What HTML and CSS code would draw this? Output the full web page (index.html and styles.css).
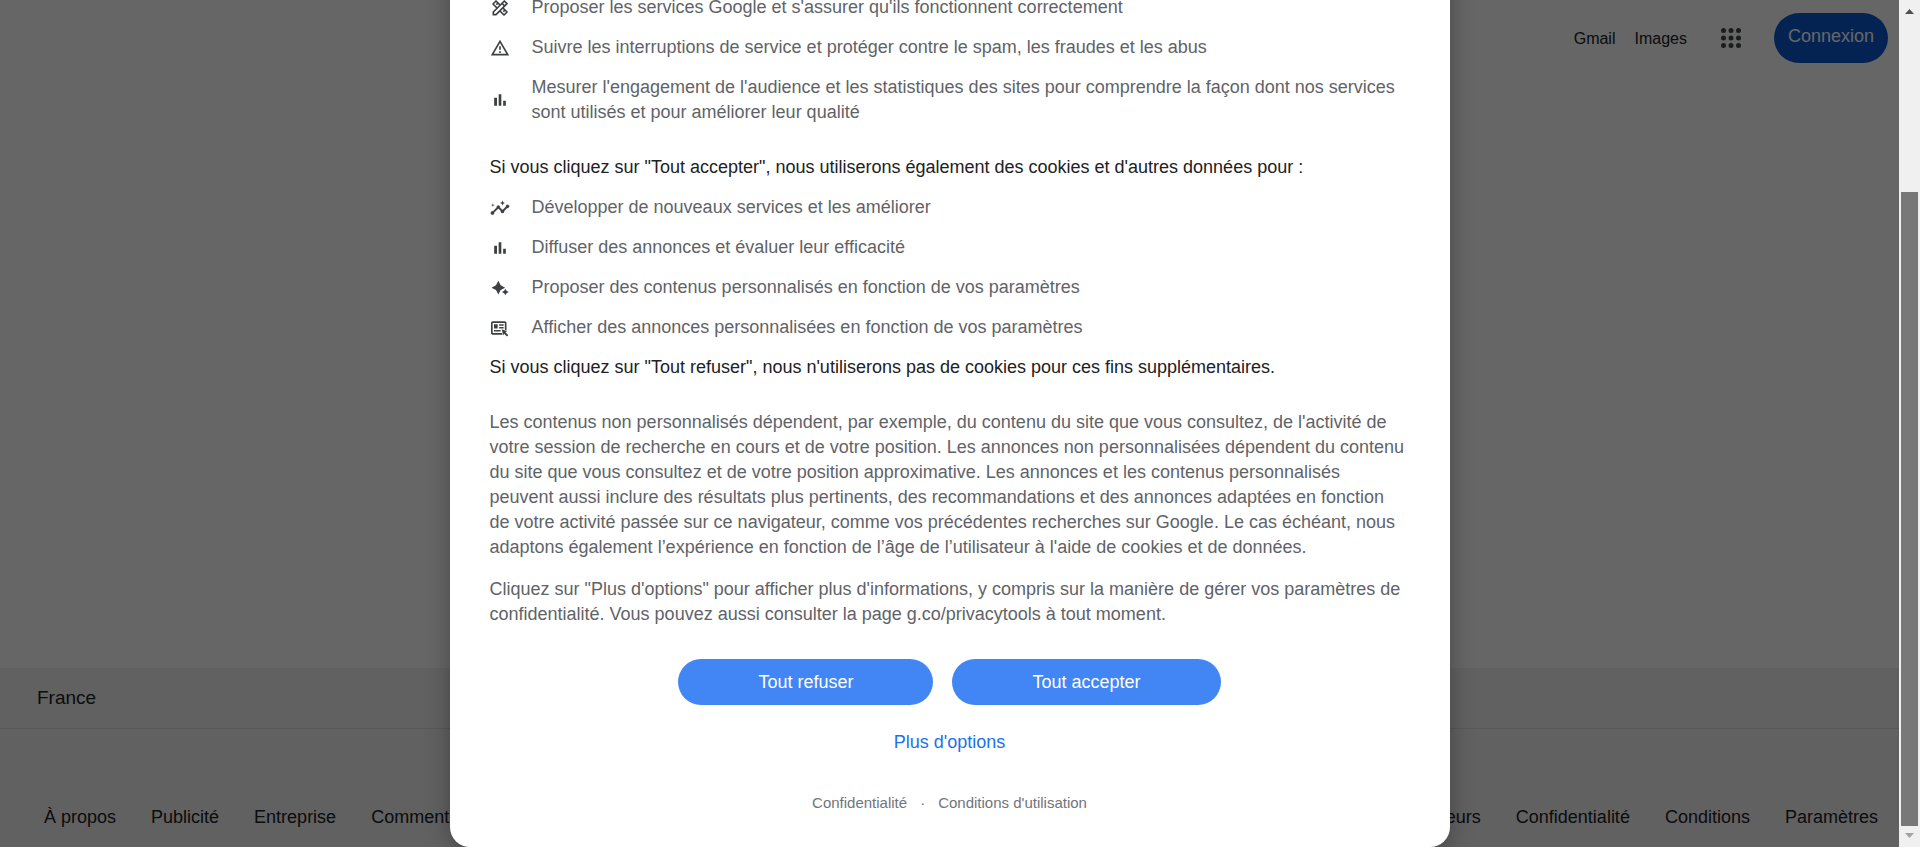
FILE: index.html
```html
<!DOCTYPE html>
<html lang="fr">
<head>
<meta charset="utf-8">
<title>Google</title>
<link rel="stylesheet" href="styles.css">
</head>
<body>
<svg class="symbols" aria-hidden="true">
  <symbol id="tools" viewBox="0 0 24 24"><g fill="#fff" stroke="#3c4043" stroke-width="2" stroke-linejoin="round"><path d="M3.600 7.200l3.600-3.600 13.200 13.200-3.600 3.600z"/><path d="M9.600 6l-2 2M18 14.400l-2 2"/><path d="M4 20v-3.200L17.200 3.600l3.200 3.200L7.200 20z"/><path d="M14.400 6.400l3.200 3.200"/></g></symbol>
  <symbol id="warning" viewBox="0 0 24 24"><path d="M12 5.99L19.53 19H4.47L12 5.99M12 2L1 21h22L12 2zm1 14h-2v2h2v-2zm0-6h-2v4h2v-4z"/></symbol>
  <symbol id="chart" viewBox="0 0 24 24"><path d="M5 9.2h3.4V19H5zM10.4 5h3.2v14h-3.2zM15.8 13H19v6h-3.2z"/></symbol>
  <symbol id="insights" viewBox="0 0 24 24"><path d="M21 8c-1.45 0-2.26 1.44-1.93 2.51l-3.55 3.56c-.3-.09-.74-.09-1.04 0l-2.55-2.55C12.27 10.45 11.46 9 10 9c-1.45 0-2.27 1.44-1.93 2.52l-4.56 4.55C2.44 15.74 1 16.55 1 18c0 1.1.9 2 2 2 1.45 0 2.26-1.44 1.93-2.51l4.55-4.56c.3.09.74.09 1.04 0l2.55 2.55C12.73 16.55 13.54 18 15 18c1.45 0 2.27-1.44 1.93-2.52l3.56-3.55C21.56 12.26 23 11.45 23 10c0-1.1-.9-2-2-2z" stroke="#3c4043" stroke-width=".4"/><path d="M15 9l.94-2.07L18 6l-2.06-.93L15 3l-.92 2.07L12 6l2.08.93zM3.5 11L4 9l2-.5L4 8l-.5-2L3 8l-2 .5L3 9z"/></symbol>
  <symbol id="sparkle" viewBox="0 0 24 24"><path d="M10 3.400l2.800 5.400 5.400 2.800-5.400 2.800L10 19.800l-2.800-5.400-5.400-2.800 5.400-2.800zM18.400 12.800l1.400 2.600 2.600 1.400-2.600 1.400-1.400 2.600-1.400-2.600-2.600-1.400 2.600-1.400z"/></symbol>
  <symbol id="ad" viewBox="0 0 24 24"><path d="M3.200 4h14.600c1.100 0 2 .9 2 2v9l-2-1V6H3.200v12h11l1 2h-12c-1.100 0-2-.9-2-2V6c0-1.100.9-2 2-2z"/><path d="M4.800 7.600h4.400v5H4.800zM11 7.600h5.400v1.800H11zM11 10.800h5.400v1.800H11zM4.800 14.400h8v1.800h-8zM14 13.600l6.600 2.200-2 1.400 3.400 3.400-1.600 1.600-3.400-3.400-1.200 1.800z"/></symbol>
</svg>
<div class="screen">
  <div class="viewport">
    <div class="home">
      <header class="topbar">
        <a href="#">Gmail</a>
        <a href="#">Images</a>
        <button class="apps" type="button" aria-label="Applications Google">
          <svg viewBox="0 0 20 20"><g fill="#444746"><circle cx="2.5" cy="2.5" r="2.5"/><circle cx="10" cy="2.5" r="2.5"/><circle cx="17.5" cy="2.5" r="2.5"/><circle cx="2.5" cy="10" r="2.5"/><circle cx="10" cy="10" r="2.5"/><circle cx="17.5" cy="10" r="2.5"/><circle cx="2.5" cy="17.5" r="2.5"/><circle cx="10" cy="17.5" r="2.5"/><circle cx="17.5" cy="17.5" r="2.5"/></g></svg>
        </button>
        <a class="signin" href="#">Connexion</a>
      </header>
      <footer class="site-footer">
        <div class="country">France</div>
        <div class="links">
          <nav><a href="#">À propos</a><a href="#">Publicité</a><a href="#">Entreprise</a><a href="#">Comment</a></nav>
          <nav><a href="#">Annonceurs</a><a href="#">Confidentialité</a><a href="#">Conditions</a><a href="#">Paramètres</a></nav>
        </div>
      </footer>
    </div>
    <div class="overlay">
      <section class="dialog" role="dialog" aria-label="Avant d'accéder à Google">
        <ul class="uses">
          <li><svg><use href="#tools"/></svg><span>Proposer les services Google et s'assurer qu'ils fonctionnent correctement</span></li>
          <li><svg><use href="#warning"/></svg><span>Suivre les interruptions de service et protéger contre le spam, les fraudes et les abus</span></li>
          <li><svg><use href="#chart"/></svg><span>Mesurer l'engagement de l'audience et les statistiques des sites pour comprendre la façon dont nos services<br>sont utilisés et pour améliorer leur qualité</span></li>
        </ul>
        <p class="lead">Si vous cliquez sur "Tout accepter", nous utiliserons également des cookies et d'autres données pour :</p>
        <ul class="uses">
          <li><svg><use href="#insights"/></svg><span>Développer de nouveaux services et les améliorer</span></li>
          <li><svg><use href="#chart"/></svg><span>Diffuser des annonces et évaluer leur efficacité</span></li>
          <li><svg><use href="#sparkle"/></svg><span>Proposer des contenus personnalisés en fonction de vos paramètres</span></li>
          <li><svg><use href="#ad"/></svg><span>Afficher des annonces personnalisées en fonction de vos paramètres</span></li>
        </ul>
        <p class="lead after">Si vous cliquez sur "Tout refuser", nous n'utiliserons pas de cookies pour ces fins supplémentaires.</p>
        <p class="detail">Les contenus non personnalisés dépendent, par exemple, du contenu du site que vous consultez, de l'activité de<br>votre session de recherche en cours et de votre position. Les annonces non personnalisées dépendent du contenu<br>du site que vous consultez et de votre position approximative. Les annonces et les contenus personnalisés<br>peuvent aussi inclure des résultats plus pertinents, des recommandations et des annonces adaptées en fonction<br>de votre activité passée sur ce navigateur, comme vos précédentes recherches sur Google. Le cas échéant, nous<br>adaptons également l’expérience en fonction de l’âge de l’utilisateur à l'aide de cookies et de données.</p>
        <p class="detail">Cliquez sur "Plus d'options" pour afficher plus d'informations, y compris sur la manière de gérer vos paramètres de<br>confidentialité. Vous pouvez aussi consulter la page g.co/privacytools à tout moment.</p>
        <div class="actions">
          <button type="button">Tout refuser</button>
          <button type="button">Tout accepter</button>
        </div>
        <a class="more" href="#">Plus d'options</a>
        <div class="legal"><a href="#">Confidentialité</a><span>·</span><a href="#">Conditions d'utilisation</a></div>
      </section>
    </div>
  </div>
  <div class="scrollbar" aria-hidden="true">
    <svg viewBox="0 0 9 5"><path fill="#505050" d="M0 5L4.5 0 9 5z"/></svg>
    <div class="thumb"></div>
    <svg viewBox="0 0 9 5"><path fill="#a3a3a3" d="M0 0h9L4.5 5z"/></svg>
  </div>
</div>
</body>
</html>
```
FILE: styles.css
```css
* { box-sizing: border-box; }

body {
  margin: 0;
  font-family: "Liberation Sans", Arial, sans-serif;
  font-size: 18px;
  line-height: 25px;
  color: #202124;
}

a { color: inherit; text-decoration: none; }
p, ul { margin: 0; padding: 0; }
button { font: inherit; border: 0; cursor: pointer; }

.symbols { display: none; }

.screen {
  display: grid;
  grid-template-columns: minmax(0, 1fr) 21px;
  height: 100vh;
  overflow: hidden;
}

.viewport { display: grid; min-height: 0; overflow: hidden; }
.home, .overlay { grid-area: 1 / 1; min-width: 0; min-height: 0; }

.home {
  display: flex;
  flex-direction: column;
  justify-content: space-between;
  background: #fff;
}

/* Top bar */
.topbar {
  display: flex;
  align-items: center;
  justify-content: flex-end;
  gap: 19px;
  padding: 13px 11px 0 0;
  font-size: 16px;
}
.apps {
  display: flex;
  margin: 0 14px 0 15px;
  padding: 0;
  background: none;
}
.apps svg { width: 20px; height: 20px; }
.signin {
  height: 50px;
  padding: 11px 14px;
  border-radius: 25px;
  background: #0b57d0;
  color: #fff;
  font-size: 18px;
}

/* Site footer */
.site-footer { background: #f2f2f2; }
.country {
  padding: 17px 37px 18px;
  border-bottom: 1px solid #dadce0;
  font-size: 19px;
}
.links {
  display: flex;
  justify-content: space-between;
  padding: 76px 21px 17px 44px;
}
.links nav { display: flex; gap: 35px; }

/* Consent dialog */
.overlay {
  display: flex;
  align-items: flex-end;
  justify-content: center;
  z-index: 1;
  background: rgba(0, 0, 0, 0.6);
}
.dialog {
  display: flex;
  flex-direction: column;
  width: 1000px;
  max-width: 100%;
  padding: 40px 40px 34px;
  border-radius: 20px;
  background: #fff;
  box-shadow: 0 5px 25px rgba(0, 0, 0, 0.3);
}
.uses {
  display: flex;
  flex-direction: column;
  gap: 15px;
  color: #5f6368;
  list-style: none;
}
.uses li { display: flex; align-items: center; gap: 22px; }
.uses svg { flex: none; width: 20px; height: 20px; fill: #3c4043; }
.uses span { white-space: nowrap; }
.lead { margin: 30px 0 15px; }
.lead.after { margin: 15px 0 30px; }
.detail { color: #5f6368; white-space: nowrap; }
.detail + .detail { margin-top: 17px; }

.actions {
  display: flex;
  justify-content: center;
  gap: 19px;
  margin-top: 32px;
}
.actions button {
  height: 46px;
  padding: 0 80px;
  border-radius: 23px;
  background: #4285f4;
  color: #fff;
}
.more { align-self: center; margin-top: 25px; color: #1a73e8; }
.legal {
  display: flex;
  justify-content: center;
  gap: 13px;
  margin-top: 38px;
  font-size: 15px;
  line-height: 20px;
  color: #70757a;
}

/* Scrollbar */
.scrollbar {
  display: flex;
  flex-direction: column;
  align-items: center;
  padding: 9px 0;
  background: #f0f0f0;
}
.scrollbar svg { flex: none; width: 9px; height: 5px; }
.thumb {
  flex: 1;
  width: 17px;
  margin: 178px 0 7px;
  background: #787878;
}
```
